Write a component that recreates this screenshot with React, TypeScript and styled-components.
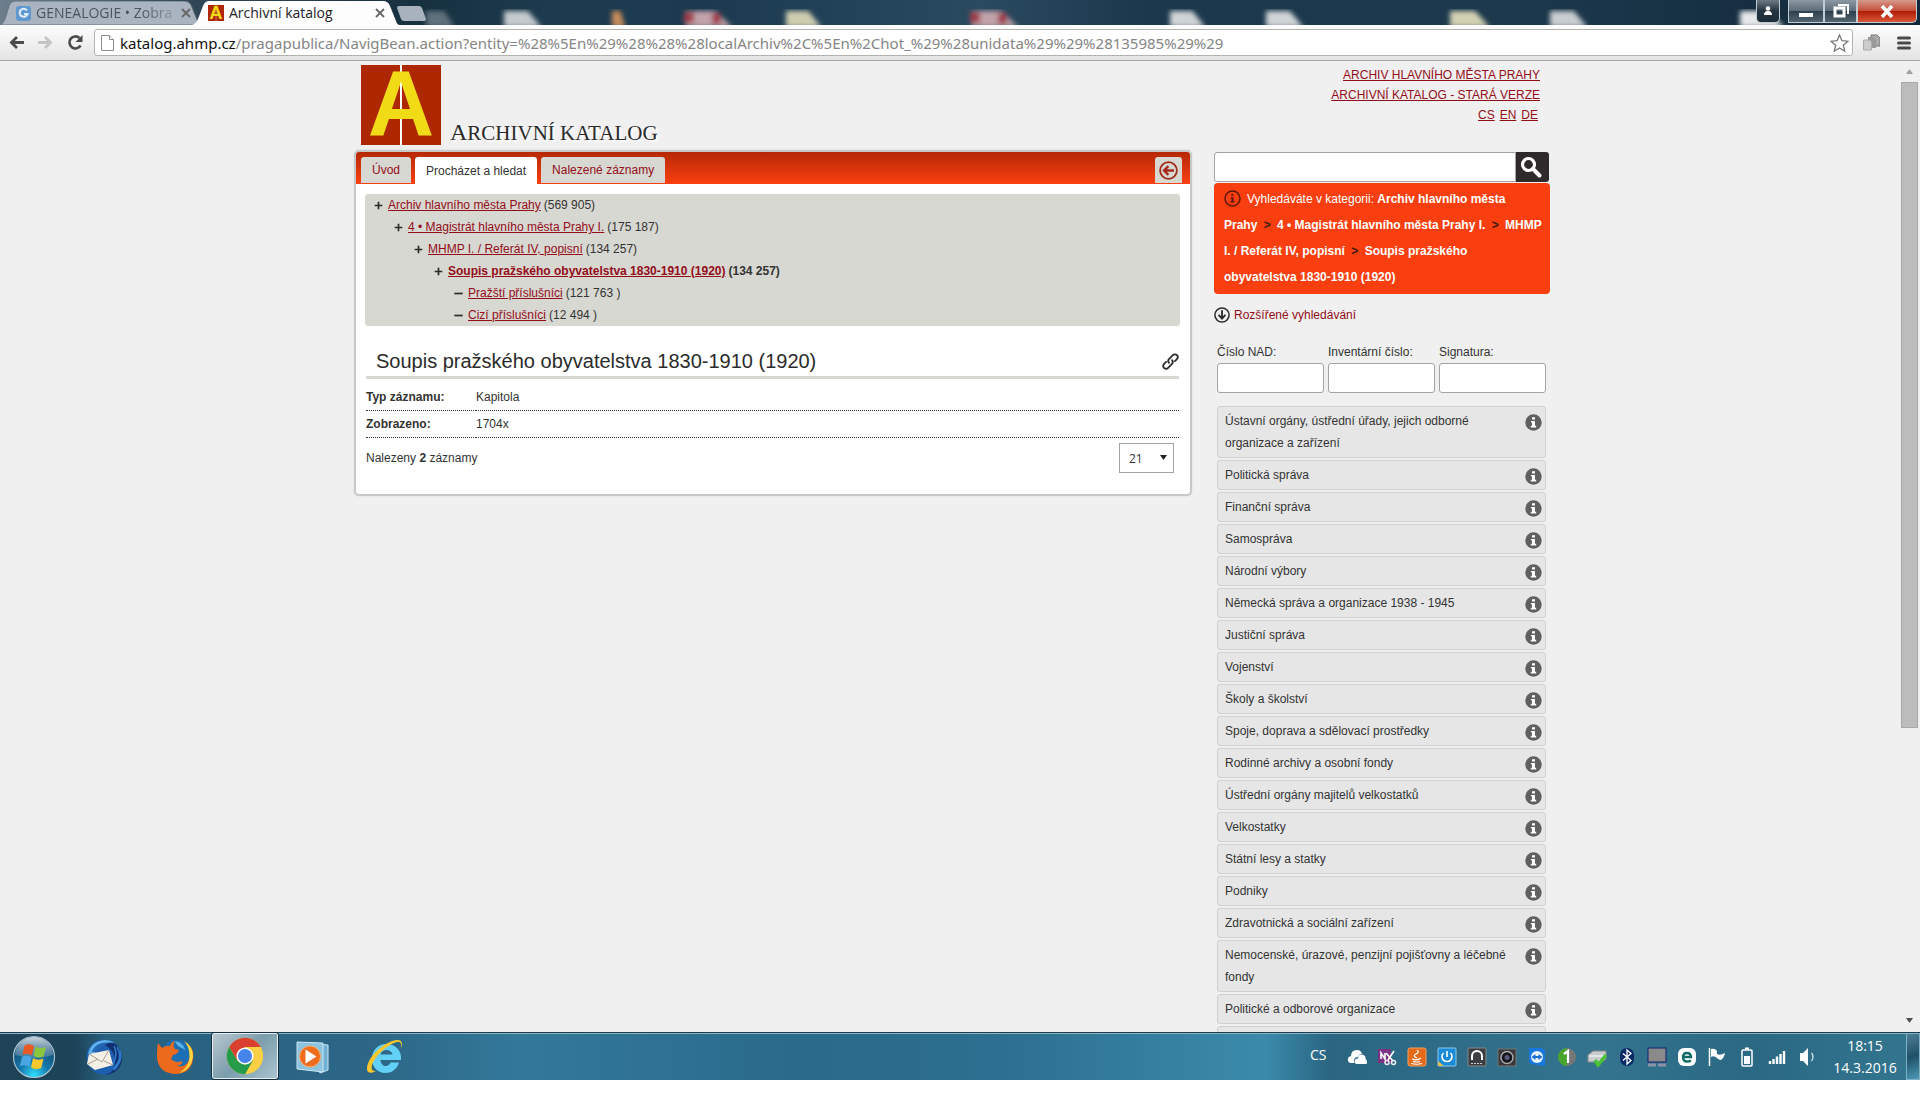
import React from "react";
import styled, { createGlobalStyle, css } from "styled-components";

const GlobalStyle = createGlobalStyle`
  *, *::before, *::after { box-sizing: border-box; }
  html, body { margin: 0; padding: 0; background: #fff; }
  body { font: 12px/22px "Liberation Sans", Arial, sans-serif; color: #333; overflow: hidden; }
  button, input, select { font: inherit; color: inherit; margin: 0; }
  ul { list-style: none; margin: 0; padding: 0; }
  svg { display: block; flex: none; }
`;

const uiFont = css`font-family: "Open Sans", "Noto Sans", sans-serif;`;

/* ---------- window frame ---------- */

const Screen = styled.div`
  height: 100vh;
  padding-bottom: 16px;
  display: flex;
  flex-direction: column;
`;

const TitleBar = styled.header`
  ${uiFont}
  position: relative;
  flex: none;
  height: 25px;
  display: flex;
  justify-content: space-between;
  align-items: flex-end;
  overflow: hidden;
  background: linear-gradient(90deg, #6d7f8c 0, #33495a 180px, #16303f 420px, #1e3c50 560px, #1b3a50 700px, #2a4a60 980px, #1b384c 1150px, #1c394d 1500px, #12283a 100%);
`;

const DesktopBlur = styled.svg`
  position: absolute;
  left: 0;
  top: 0;
`;

const Tabs = styled.div`
  position: relative;
  display: flex;
  align-items: flex-end;
`;

const ChromeTab = styled.div<{ $active?: boolean }>`
  position: relative;
  width: ${(p) => (p.$active ? 208 : 200)}px;
  height: 24px;
  margin-left: ${(p) => (p.$active ? -8 : 0)}px;
  padding: 0 ${(p) => (p.$active ? 15 : 9)}px 0 16px;
  display: flex;
  align-items: center;
  gap: 5px;
  font-size: 14px;
  line-height: 24px;
  color: ${(p) => (p.$active ? "#222" : "#4c545c")};
`;

const TabShape = styled.svg`
  position: absolute;
  inset: 0;
`;

const TabTitle = styled.span<{ $fade?: boolean }>`
  position: relative;
  flex: 1;
  white-space: nowrap;
  ${(p) => p.$fade && css`mask-image: linear-gradient(90deg, #000 75%, rgba(0, 0, 0, 0.2));`}
`;

const PlainButton = styled.button`
  position: relative;
  border: 0;
  padding: 0;
  background: none;
  display: flex;
  align-items: center;
  justify-content: center;
`;

const TabIcon = styled.span`
  position: relative;
`;

const NewTab = styled(PlainButton)`
  align-self: center;
  margin-left: -4px;
`;

const WindowControls = styled.div`
  position: relative;
  align-self: flex-start;
  display: flex;
  padding-right: 3px;
`;

const WindowButton = styled(PlainButton)<{ $w: number; $close?: boolean; $gap?: boolean }>`
  width: ${(p) => p.$w}px;
  height: 23px;
  margin-right: ${(p) => (p.$gap ? 8 : 0)}px;
  border: 1px solid #c3ccd2;
  border-top: 0;
  border-radius: ${(p) => (p.$gap ? "0 0 5px 5px" : p.$close ? "0 0 5px 0" : "0")};
  background: ${(p) =>
    p.$close
      ? "linear-gradient(#d59a8c, #c4503a 48%, #b01c05 52%, #d9583a)"
      : p.$gap
        ? "linear-gradient(#6c7b86, #22323e 50%, #1d2d39)"
        : "linear-gradient(#8b99a3, #5d6d79 48%, #2f414e 52%, #526470)"};
`;

const Toolbar = styled.nav`
  ${uiFont}
  flex: none;
  height: 36px;
  display: flex;
  align-items: center;
  background: linear-gradient(#fdfdfd, #e4e4e4);
  border-bottom: 1px solid #a3a3a3;
  padding-left: 5px;
`;

const ToolButton = styled(PlainButton)<{ $w: number }>`
  width: ${(p) => p.$w}px;
  height: 26px;
`;

const Omnibox = styled.div`
  flex: 1;
  height: 27px;
  margin: 0 1px 0 5px;
  padding: 0 3px 0 6px;
  display: flex;
  align-items: center;
  gap: 6px;
  background: #fff;
  border: 1px solid #b3b3ad;
  border-radius: 3px;
`;

const Url = styled.span`
  flex: 1;
  font-family: "Noto Sans", sans-serif;
  font-size: 15px;
  line-height: 24px;
  color: #858585;
  white-space: nowrap;
  b { font-weight: 400; color: #111; }
`;

/* ---------- web page ---------- */

const Viewport = styled.div`
  flex: 1;
  min-height: 0;
  display: flex;
  overflow: hidden;
  background: #f0f0f0;
`;

const PageArea = styled.div`
  flex: 1;
  min-width: 0;
`;

const Container = styled.div`
  max-width: 1200px;
  margin: 0 auto;
  padding-left: 4px;
`;

const ScrollTrack = styled.div`
  width: 20px;
  padding: 8px 2px 9px 1px;
  display: flex;
  flex-direction: column;
  align-items: center;
  gap: 8px;
`;

const ScrollThumb = styled.div`
  flex: 0 1 646px;
  width: 17px;
  background: #bcbcbc;
  border: 1px solid #a8a8a8;
`;

const Spacer = styled.div`
  flex: 1;
`;

const PageHead = styled.div`
  display: flex;
  justify-content: space-between;
  padding: 4px 10px 4px 7px;
`;

const Brand = styled.a`
  display: flex;
  align-items: flex-end;
  gap: 9px;
  color: #2b2b2b;
  text-decoration: none;
`;

const BrandName = styled.span`
  font: 21px/24px "Liberation Serif", "Times New Roman", serif;
  text-shadow: 2px 2px 2px #fff;
  &::first-letter { font-size: 24px; }
`;

const TopLinks = styled.div`
  display: flex;
  flex-direction: column;
  align-items: flex-end;
  line-height: 20px;
`;

const Link = styled.a`
  color: #930d19;
  text-decoration: underline;
`;

const Languages = styled.div`
  display: flex;
  gap: 5px;
  padding-right: 2px;
`;

const Columns = styled.div`
  display: flex;
  align-items: flex-start;
  gap: 22px;
`;

const Panel = styled.main`
  flex: 1;
  min-width: 0;
  margin-top: 1px;
  background: #fff;
  border: 2px solid #c8c8c8;
  border-radius: 5px;
  box-shadow: 0 0 2px #d4d4d4;
  padding-bottom: 21px;
`;

const PanelTabs = styled.div`
  display: flex;
  gap: 4px;
  height: 32px;
  padding: 5px 8px 0 5px;
  background: linear-gradient(#b52806, #fb4010);
  border-radius: 3px 3px 0 0;
`;

const PanelTab = styled.button<{ $active?: boolean; $end?: boolean }>`
  height: ${(p) => (p.$active ? 27 : 26)}px;
  padding: 0 ${(p) => (p.$end ? 4 : 11)}px;
  margin-left: ${(p) => (p.$end ? "auto" : "0")};
  border: 0;
  border-radius: 3px 3px 0 0;
  background: ${(p) => (p.$active ? "#fff" : "#d8d8d2")};
  color: ${(p) => (p.$active ? "#333" : "#930d19")};
`;

const Tree = styled.ul`
  margin: 10px 10px 0 9px;
  background: #d8d8d2;
  border-radius: 3px;
`;

const TreeItem = styled.li<{ $level: number; $current?: boolean }>`
  display: flex;
  align-items: center;
  gap: 3px;
  padding-left: ${(p) => 9 + p.$level * 20}px;
  font-weight: ${(p) => (p.$current ? 700 : 400)};
  svg { margin-right: 2px; }
`;

const RecordHead = styled.div`
  display: flex;
  align-items: center;
  justify-content: space-between;
  margin: 20px 11px 0 10px;
  padding-left: 10px;
  border-bottom: 3px solid #d8d8d2;
`;

const Heading = styled.h1`
  margin: 0;
  font-size: 20px;
  line-height: 30px;
  font-weight: 400;
  color: #2b2b2b;
`;

const Facts = styled.table`
  width: calc(100% - 21px);
  margin: 5px 11px 0 10px;
  border-collapse: separate;
  border-spacing: 0;
  th, td {
    height: 27px;
    padding: 0;
    text-align: left;
    border-bottom: 1px dotted #333;
  }
  th { width: 110px; }
`;

const Found = styled.div`
  display: flex;
  align-items: flex-start;
  justify-content: space-between;
  margin: 5px 16px 0 10px;
  line-height: 30px;
`;

const SelectBox = styled.span`
  position: relative;
  svg { position: absolute; right: 7px; top: 12px; pointer-events: none; }
`;

const Select = styled.select`
  ${uiFont}
  appearance: none;
  display: block;
  width: 55px;
  height: 30px;
  padding: 0 9px;
  font-size: 12px;
  background: #fff;
  border: 1px solid #a3a3a3;
  border-radius: 0;
`;

/* ---------- side column ---------- */

const Side = styled.aside`
  width: 336px;
  flex: none;
`;

const Search = styled.form`
  display: flex;
  padding: 3px 1px 0 0;
`;

const TextBox = styled.input<{ $search?: boolean }>`
  width: 100%;
  height: 30px;
  padding: 0 8px;
  background: #fff;
  border: 1px solid #a3a3a3;
  border-radius: ${(p) => (p.$search ? "3px 0 0 3px" : "3px")};
`;

const SearchButton = styled.button`
  flex: none;
  width: 33px;
  height: 30px;
  border: 0;
  padding: 0 0 0 4px;
  background: #2e2a2b;
  border-radius: 0 3px 3px 0;
`;

const Notice = styled.p`
  margin: 1px 0 0;
  padding: 3px 8px 4px 10px;
  background: #f93f0f;
  border-radius: 4px;
  color: #fff;
  line-height: 26px;
  svg { display: inline-block; vertical-align: -4px; margin-right: 6px; }
  i { font-style: normal; font-weight: 700; color: #3a1a12; margin: 0 3px; }
`;

const Advanced = styled.button`
  display: flex;
  align-items: center;
  gap: 4px;
  height: 22px;
  margin-top: 10px;
  padding: 0;
  border: 0;
  background: none;
  color: #930d19;
`;

const Fields = styled.div`
  display: grid;
  grid-template-columns: repeat(3, 1fr);
  gap: 4px;
  margin: 15px 4px 13px 3px;
`;

const Field = styled.label`
  display: block;
`;

const Categories = styled.ul`
  margin: 0 4px 0 3px;
  display: flex;
  flex-direction: column;
  gap: 2px;
`;

const Category = styled.li`
  display: flex;
  justify-content: space-between;
  align-items: flex-start;
  padding: 3px 3px 3px 7px;
  background: #e6e6e6;
  border: 1px solid #d0d0d0;
  border-radius: 3px;
  svg { margin-top: 4px; }
`;

const CategoryName = styled.span`
  max-width: 290px;
`;

/* ---------- taskbar ---------- */

const Taskbar = styled.footer`
  ${uiFont}
  flex: none;
  height: 48px;
  display: flex;
  align-items: stretch;
  justify-content: space-between;
  color: #fff;
  background: linear-gradient(90deg, #1f4357 0, #1d4358 75px, #28607f 105px, #2d6787 380px, #33799a 520px, #2a6a8b 800px, #2d6f90 1000px, #3b8aab 1265px, #2a6682 1330px, #34748f 1600px, #2a6883 1750px, #34768f 100%);
  border-top: 1px solid #1b3d50;
  box-shadow: inset 0 1px 0 #8db2c4;
`;

const Apps = styled.div`
  display: flex;
`;

const AppButton = styled(PlainButton)<{ $w: number; $open?: boolean }>`
  width: ${(p) => p.$w}px;
  ${(p) =>
    p.$open &&
    css`
      background: linear-gradient(135deg, #b9c8cf, #7b9dac 50%, #a9c4cf);
      border: 1px solid #e4eef2;
      outline: 1px solid #17303e;
      border-radius: 2px;
      margin: 0 0 1px 3px;
    `}
`;

const Tray = styled.div`
  display: flex;
  align-items: center;
`;

const Language = styled.span`
  width: 32px;
  font-size: 14px;
  padding-bottom: 4px;
`;

const TrayCell = styled.span`
  width: 30px;
  display: flex;
  justify-content: center;
`;

const Clock = styled.time`
  width: 82px;
  margin-left: 2px;
  text-align: center;
  font-size: 14px;
  line-height: 22px;
`;

const ShowDesktop = styled(PlainButton)`
  align-self: stretch;
  width: 14px;
  border: 1px solid #7fb0c4;
  background: linear-gradient(160deg, #4e7f95, #1f5069 50%, #4d9ab6);
`;

/* ---------- icons ---------- */

const InfoFilled = () => (
  <svg width="17" height="17" viewBox="0 0 17 17">
    <circle cx="8.5" cy="8.5" r="8.2" fill="#606060" />
    <path d="M7 3.2h3v2.3H7zM6 7h4v4.8h1.2v1.6H5.8v-1.6H7V8.6H6z" fill="#fff" />
  </svg>
);

const InfoOutline = () => (
  <svg width="17" height="17" viewBox="0 0 17 17">
    <circle cx="8.5" cy="8.5" r="7.5" fill="none" stroke="#5b160a" strokeWidth="1.5" />
    <path d="M7.3 4h2.2v1.8H7.3zM6.6 7.2h2.9v4.1h1.1v1.3H6.4v-1.3h1.1V8.5h-.9z" fill="#5b160a" />
  </svg>
);

const CircleArrow = ({ down }: { down?: boolean }) => (
  <svg width={down ? 16 : 19} height={down ? 16 : 19} viewBox="0 0 19 19" fill="none" stroke={down ? "#2b2b2b" : "#a32a1c"} strokeWidth="1.8">
    <circle cx="9.5" cy="9.5" r="8.4" />
    {down ? <path d="M9.5 4v10M5.4 9.4l4.1 4.4 4.1-4.4" strokeWidth="2.2" /> : <path d="M15 9.5H5M9.4 5.2L5 9.5l4.4 4.3" strokeWidth="2.4" />}
  </svg>
);

const Sign = ({ plus }: { plus: boolean }) => (
  <svg width="9" height="9" viewBox="0 0 9 9" stroke="#2b2b2b" strokeWidth="1.7">
    <path d={plus ? "M.7 4.5h7.6M4.5.7v7.6" : "M.3 4.5h8.4"} />
  </svg>
);

const ChainIcon = () => (
  <svg width="17" height="17" viewBox="0 0 17 17" fill="none" stroke="#2b2b2b" strokeWidth="1.8" strokeLinecap="round">
    <path d="M7 9.9C5.8 8.5 6 7 7.2 5.8L10.6 2.4C12 1 13.8 1 15 2.2 16.1 3.4 15.9 5.1 14.7 6.3L12.900 8.1" />
    <path d="M10 7.1C11.2 8.5 11 10 9.8 11.2L6.4 14.6C5 16 3.2 16 2 14.8.9 13.6 1.1 11.900 2.3 10.7L4.1 8.9" />
  </svg>
);

const SearchIcon = () => (
  <svg width="22" height="22" viewBox="0 0 22 22" fill="none" stroke="#fff">
    <circle cx="8.5" cy="8.5" r="6" strokeWidth="3.2" />
    <path d="M13 13l6.500 6.500" strokeWidth="4" strokeLinecap="round" />
  </svg>
);

const Triangle = ({ up, fill = "#505050", size = 7 }: { up?: boolean; fill?: string; size?: number }) => (
  <svg width={size} height={size - 2} viewBox="0 0 7 5" preserveAspectRatio="none">
    <path d={up ? "M3.5 0L7 5H0z" : "M0 0h7L3.500 5z"} fill={fill} />
  </svg>
);

const LogoSvg = styled.svg`
  overflow: visible;
`;

const ArchiveLogo = ({ size }: { size: number }) => (
  <LogoSvg width={size} height={size} viewBox="0 0 80 80">
    <rect width="80" height="80" fill="#ad2700" />
    <rect x="39" width="2" height="80" fill="#fff" />
    <text x="40" y="70" textAnchor="middle" fontFamily="Liberation Sans, Arial, sans-serif" fontWeight="700" fontSize="92" fill="#f1da16">A</text>
  </LogoSvg>
);

const CloseX = () => (
  <svg width="10" height="10" viewBox="0 0 10 10" stroke="#666" strokeWidth="1.8">
    <path d="M1 1l8 8M9 1L1 9" />
  </svg>
);

const ToolArrow = ({ back }: { back?: boolean }) => (
  <svg width="16" height="13" viewBox="0 0 17 14" fill="none" stroke={back ? "#4a4a4a" : "#c4c4c4"} strokeWidth="3">
    <path d={back ? "M16 7H3M8.5 1.2L2.5 7l6 5.8" : "M1 7h13M8.5 1.2l6 5.8-6 5.8"} />
  </svg>
);

const Reload = () => (
  <svg width="17" height="17" viewBox="0 0 17 17">
    <path d="M13.6 11.5A6 6 0 1 1 12.5 4" fill="none" stroke="#4a4a4a" strokeWidth="2.6" />
    <path d="M15.5 1v7H8.500z" fill="#4a4a4a" />
  </svg>
);

const StartOrb = () => (
  <svg width="44" height="44" viewBox="0 0 44 44">
    <defs>
      <radialGradient id="orb" cx=".5" cy=".95" r=".9">
        <stop offset="0" stopColor="#2fe0ff" />
        <stop offset=".4" stopColor="#1579ad" />
        <stop offset="1" stopColor="#123b5c" />
      </radialGradient>
      <linearGradient id="gloss" x2="0" y2="1">
        <stop offset="0" stopColor="#e8f1f6" stopOpacity=".85" />
        <stop offset="1" stopColor="#9cb6c8" stopOpacity=".3" />
      </linearGradient>
    </defs>
    <circle cx="22" cy="22" r="20.5" fill="url(#orb)" stroke="#a9c4d2" strokeWidth="1.2" />
    <path d="M3 20a19 18 0 0 1 38 0q-19 6-38 0z" fill="url(#gloss)" />
    <path d="M12.5 10.5q5-2.5 9.5.5l-2 9.5q-4.500-3-9.500-.5z" fill="#ea5a24" />
    <path d="M23.5 11.5q5 3 10.5.5l-2.300 9.500q-5 2.500-10-.5z" fill="#8cc63c" />
    <path d="M10 22q5-2.5 9.5.5l-2 9.5q-4.500-3-9.700-.5z" fill="#4aa5e4" />
    <path d="M21 23q5 3 10.500.5l-2.300 9.500q-5 2.500-10.200-.5z" fill="#fcc82c" />
  </svg>
);

const MailBird = () => (
  <svg width="40" height="40" viewBox="0 0 40 40">
    <circle cx="20" cy="20" r="17.5" fill="#1d5fae" />
    <path d="M14 4C26 0 38 9 38 21c0 10-8 17-18 17 6-1 11-5 11-11 1-12-5-17-17-23z" fill="#12306f" />
    <path d="M4 17C6 5 20-1 31 6c-9-2-17 2-20 10z" fill="#5eb0ec" />
    <path d="M8 15C10 8 18 4 26 6c-6 1-11 4-13 9z" fill="#2668b8" />
    <path d="M33 10q7 11-4 22M30 9q5 10-3 20M36 14q3 10-6 19" fill="none" stroke="#2f7bc9" strokeWidth="1.5" />
    <path d="M5 17l20-4 4 15-18 5L3 27z" fill="#f4f0e6" />
    <path d="M5 17l13 8 7-12M4 27l10-5M29 28l-9-4" fill="none" stroke="#a89f90" strokeWidth="1" />
  </svg>
);

const FoxGlobe = () => (
  <svg width="38" height="38" viewBox="0 0 38 38">
    <circle cx="21" cy="17" r="15.500" fill="#1d6fb5" />
    <path d="M17 3c7 0 11 4 12 9-4-3-8-3-10-9z" fill="#5cb4e4" />
    <path d="M2 5l4 5q4-3 8-2 1-4 5-5-3 5 0 8l4 1q-1 4-6 5l-2 4q5 5 11 2 1 4-5 5 12 2 13-12 0-7-5-12 10 5 8 17-2 15-18 15Q2 35 1 19 1 10 2 5z" fill="#ec6a1b" />
    <path d="M28 3q9 5 9 16-2 13-14 16 13-8 10-22-1-6-5-10z" fill="#ffd83f" />
  </svg>
);

const ChromeIcon = () => (
  <svg width="38" height="38" viewBox="0 0 38 38">
    <circle cx="19" cy="19" r="18.2" fill="#f9cf45" />
    <path d="M3.24 9.9A18.2 18.2 0 0 1 34.76 9.900H19L11.1 23.5z" fill="#d9402f" />
    <path d="M3.24 9.9A18.2 18.2 0 0 0 19 37.2l7.900-13.700-7.900 4.200-7.900-4.200z" fill="#239b48" />
    <circle cx="19" cy="19" r="8.6" fill="#fff" />
    <circle cx="19" cy="19" r="7" fill="#4683ea" />
  </svg>
);

const PlayerIcon = () => (
  <svg width="34" height="34" viewBox="0 0 34 34">
    <path d="M8 3l24 2v25l-8 3z" fill="#6fb0d3" stroke="#cde7f3" />
    <path d="M1 2l26 1v29L1 29z" fill="#8cc3df" stroke="#cde7f3" />
    <circle cx="14" cy="16.5" r="10.5" fill="#f06c1d" stroke="#fbb070" />
    <path d="M9.5 9.5l11 7-11 7z" fill="#fff" />
  </svg>
);

const ExplorerIcon = () => (
  <svg width="40" height="40" viewBox="0 0 40 40">
    <path d="M34 25.500C32 33 26 36 20.500 36 12 36 7 29.500 7 22 7 13 13 7 21.500 7 31 7 37 14 36 23H15.500c.5 7.500 8.500 7.500 10 2.500zM15.500 17.500h12c-1-6-11-6-12 0z" fill="#62d1f5" />
    <path d="M36 12c2-5 1-9-3-9C24 2 2 18 2 32c0 4 4 5 9 2-4 0-5-2-4-6C10 19 23 7 32 5c4-1 5 3 4 7z" fill="#f7c82c" />
  </svg>
);

const trayIcons: { name: string; art: React.ReactNode }[] = [
  { name: "cloud", art: <><path d="M1 14q-1-4 3-5 0-6 6-6 4 0 5 4-3 0-4 3-4 0-4 4 0 1 .5 2H4q-2.500 0-3-2z" fill="#fff" /><path d="M8 16q-1.500-4 3-4.500 0-4 4-4 4 .5 3.500 4.500 2.500 1.500 1 5H10q-1.500 0-2-1z" fill="#fff" /></> },
  { name: "snip", art: <><rect x="1" y="2" width="13" height="14" fill="#7c3383" /><path d="M4 12V6l4 6V6" stroke="#fff" strokeWidth="1.6" fill="none" /><path d="M17 4l-6 9M9 6l7 8" stroke="#fff" strokeWidth="1.6" /><g fill="none" stroke="#eee" strokeWidth="1.5"><circle cx="10" cy="15.5" r="2" /><circle cx="16.5" cy="15.5" r="2" /></g></> },
  { name: "java", art: <><rect x="1" y="1" width="18" height="18" rx="2" fill="#e46a1a" stroke="#f0a060" /><path d="M10 3q3 2-1 4t1 4M5 12q5 2 9-1M6 14.500q4 1 7 0M4 16.500q6 1.500 11 0" stroke="#fff" fill="none" strokeWidth="1.2" /></> },
  { name: "power", art: <><rect x="1" y="1" width="18" height="18" rx="1" fill="#1a8bd8" stroke="#8cc8ee" /><path d="M6.5 6a5 5 0 1 0 7 0M10 4v6" stroke="#fff" fill="none" strokeWidth="1.6" /><path d="M1 14l6 5H1z" fill="#e0c050" /></> },
  { name: "audio", art: <><rect x="1" y="1" width="18" height="18" rx="1" fill="#3b3f44" stroke="#888" /><path d="M5 13V9a5 5 0 0 1 10 0v4" stroke="#fff" fill="none" strokeWidth="2" /><path d="M4 16.5h12" stroke="#ccc" strokeDasharray="2 1" /></> },
  { name: "camera", art: <><rect x="1" y="2" width="18" height="17" fill="#39393c" stroke="#777" /><circle cx="10" cy="10.5" r="6" fill="#15151c" stroke="#aaa" strokeWidth="1.5" /><circle cx="10" cy="10.5" r="2.5" fill="#5a5a80" /></> },
  { name: "remote", art: <><path d="M2 1h13l3 3v15l-14-2-2-2z" fill="#1878e0" /><circle cx="10" cy="10" r="6" fill="#eaf4ff" /><path d="M4.5 10l4-3v2h3V7l4 3-4 3v-2h-3v2z" fill="#1a6ed0" /></> },
  { name: "one", art: <><circle cx="10" cy="10" r="9" fill="#777" /><path d="M10 1a9 9 0 0 0 0 18z" fill="#47a52c" /><path d="M7 7l4-3v12" stroke="#fff" strokeWidth="2.2" fill="none" /></> },
  { name: "printer", art: <><path d="M1 8l5-4h13v8l-4 3H1z" fill="#c8ccd0" stroke="#888" /><path d="M2 9h16" stroke="#fff" /><path d="M8 13l3 5 8-10" stroke="#49c233" strokeWidth="3.5" fill="none" /></> },
  { name: "bluetooth", art: <><rect x="3" y="1" width="14" height="18" rx="7" fill="#0b2a66" /><path d="M6 6.5l8 7-4 3.500V3l4 3.500-8 7" stroke="#fff" fill="none" strokeWidth="1.3" /></> },
  { name: "display", art: <><rect x="1" y="1" width="18" height="14" fill="#8a8a8a" stroke="#14206e" /><path d="M1 18h8M11 18h8" stroke="#8a93a8" strokeWidth="3" /></> },
  { name: "security", art: <><rect x="1" y="1" width="18" height="18" rx="6" fill="#fff" /><path d="M6 10h8q0-4-4-4t-4 4q0 4.500 4 4.500 2.500 0 3.800-1.200" stroke="#0b6a66" strokeWidth="2.4" fill="none" /></> },
  { name: "flag", art: <><path d="M2.5 1v18" stroke="#fff" strokeWidth="1.5" /><path d="M4 2q4-1 6 2v7q-3-3-6-1zM10 7q3 2 8-1-1 5-4 7-2 0-4-2z" fill="#fff" /></> },
  { name: "battery", art: <><rect x="5" y="3" width="10" height="16" rx="1" fill="none" stroke="#fff" strokeWidth="1.5" /><path d="M8 1.5h4" stroke="#fff" strokeWidth="2" /><rect x="7" y="9" width="6" height="8" fill="#fff" /></> },
  { name: "signal", art: <path d="M3 17v-3M6.500 17v-5M10 17v-7.500M13.500 17V7M17 17V4" stroke="#fff" strokeWidth="2.4" /> },
  { name: "volume", art: <><path d="M3 6h3l5-5v18l-5-5H3z" fill="#fff" /><path d="M14.5 6q3 4 0 8" stroke="#cfe0e8" fill="none" strokeWidth="1.3" /></> },
];

const blobs: { x: number; w: number; fill: string }[] = [
  { x: 426, w: 26, fill: "#5f717d" }, { x: 504, w: 34, fill: "#c5cacd" }, { x: 612, w: 12, fill: "#c98d5a" },
  { x: 686, w: 42, fill: "#c3a3aa" }, { x: 786, w: 32, fill: "#cfcdb0" }, { x: 972, w: 42, fill: "#c3a3aa" },
  { x: 1170, w: 32, fill: "#d0d4d6" }, { x: 1266, w: 34, fill: "#d0d4d6" }, { x: 1450, w: 36, fill: "#d3d1b4" },
  { x: 1550, w: 34, fill: "#c9cdd0" }, { x: 1740, w: 40, fill: "#e6e9ea" },
];

const tree = [
  { level: 0, name: "Archiv hlavního města Prahy", count: "(569 905)" },
  { level: 1, name: "4 • Magistrát hlavního města Prahy I.", count: "(175 187)" },
  { level: 2, name: "MHMP I. / Referát IV, popisní", count: "(134 257)" },
  { level: 3, name: "Soupis pražského obyvatelstva 1830-1910 (1920)", count: "(134 257)" },
  { level: 4, name: "Pražští příslušníci", count: "(121 763 )" },
  { level: 4, name: "Cizí příslušníci", count: "(12 494 )" },
];

const categories = [
  "Ústavní orgány, ústřední úřady, jejich odborné organizace a zařízení",
  "Politická správa",
  "Finanční správa",
  "Samospráva",
  "Národní výbory",
  "Německá správa a organizace 1938 - 1945",
  "Justiční správa",
  "Vojenství",
  "Školy a školství",
  "Spoje, doprava a sdělovací prostředky",
  "Rodinné archivy a osobní fondy",
  "Ústřední orgány majitelů velkostatků",
  "Velkostatky",
  "Státní lesy a statky",
  "Podniky",
  "Zdravotnická a sociální zařízení",
  "Nemocenské, úrazové, penzijní pojišťovny a léčebné fondy",
  "Politické a odborové organizace",
  "\u00a0",
];

/* ---------- sections ---------- */

const BrowserChrome = () => (
  <>
    <TitleBar>
      <DesktopBlur width="1920" height="25">
        <defs><filter id="soft"><feGaussianBlur stdDeviation="2.5" /></filter></defs>
        <g filter="url(#soft)">
          {blobs.map((b) => (
            <path key={b.x} d={`M${b.x} 11h${b.w * 0.7}l${b.w * 0.4} 16H${b.x}z`} fill={b.fill} />
          ))}
          <path d="M684 12h10v11h-10zM712 13h9v11h-9zM970 12h10v11h-10zM998 13h9v11h-9z" fill="#a03a48" />
        </g>
      </DesktopBlur>
      <Tabs>
        <ChromeTab>
          <TabShape width="200" height="24">
            <path d="M0 24Q3 23 5 18L9 5Q11 0 16 0H184q5 0 7 4l8 20z" fill="#a9b4c0" stroke="#66737e" />
          </TabShape>
          <TabIcon>
            <svg width="15" height="15" viewBox="0 0 15 15"><rect width="15" height="15" rx="3" fill="#5f97cf" /><path d="M11 4.5A4 4 0 1 0 11.500 8H8" fill="none" stroke="#e2eefa" strokeWidth="2" /></svg>
          </TabIcon>
          <TabTitle $fade>GENEALOGIE • Zobra</TabTitle>
          <PlainButton aria-label="Zavřít panel"><CloseX /></PlainButton>
        </ChromeTab>
        <ChromeTab $active>
          <TabShape width="208" height="24">
            <path d="M0 24Q4 23 6 18L11 5Q13 0 17 0H191q5 0 7 5l6 15q1 4 4 4z" fill="#fdfdfd" />
          </TabShape>
          <TabIcon><ArchiveLogo size={16} /></TabIcon>
          <TabTitle>Archivní katalog</TabTitle>
          <PlainButton aria-label="Zavřít panel"><CloseX /></PlainButton>
        </ChromeTab>
        <NewTab aria-label="Nový panel">
          <svg width="30" height="15" viewBox="0 0 30 15"><path d="M1 2q0-2 2-2h20q2 0 3 2l4 11q0 2-2 2H8q-2 0-3-2z" fill="#a7b2bd" /></svg>
        </NewTab>
      </Tabs>
      <WindowControls>
        <WindowButton $w={24} $gap aria-label="Profil">
          <svg width="10" height="10" viewBox="0 0 10 10" fill="#fff"><circle cx="5" cy="2.5" r="2.3" /><path d="M1 9q0-4 4-4t4 4z" /></svg>
        </WindowButton>
        <WindowButton $w={36} aria-label="Minimalizovat">
          <svg width="16" height="14" viewBox="0 0 16 14"><rect x="1" y="9" width="14" height="4" fill="#fff" /></svg>
        </WindowButton>
        <WindowButton $w={33} aria-label="Obnovit">
          <svg width="18" height="16" viewBox="0 0 18 16" fill="none" stroke="#fff" strokeWidth="2"><path d="M6 2h10v9" /><rect x="3" y="5" width="9" height="8" strokeWidth="3" /></svg>
        </WindowButton>
        <WindowButton $w={60} $close aria-label="Zavřít">
          <svg width="14" height="13" viewBox="0 0 14 13" stroke="#fff" strokeWidth="3.6"><path d="M2 1l10 11M12 1L2 12" /></svg>
        </WindowButton>
      </WindowControls>
    </TitleBar>
    <Toolbar>
      <ToolButton $w={24} aria-label="Zpět"><ToolArrow back /></ToolButton>
      <ToolButton $w={32} aria-label="Vpřed"><ToolArrow /></ToolButton>
      <ToolButton $w={28} aria-label="Obnovit stránku"><Reload /></ToolButton>
      <Omnibox>
        <svg width="13" height="16" viewBox="0 0 13 16" fill="#fff" stroke="#8c8c8c"><path d="M.5.5h8l4 4v11H.5z" /><path d="M8.5.5v4h4" /></svg>
        <Url><b>katalog.ahmp.cz</b>/pragapublica/NavigBean.action?entity=%28%5En%29%28%28%28localArchiv%2C%5En%2Chot_%29%28unidata%29%29%28135985%29%29</Url>
        <svg width="19" height="18" viewBox="0 0 19 18" fill="none" stroke="#777" strokeWidth="1.3"><path d="M9.5 1l2.400 5.700 6.100.5-4.700 4 1.500 6-5.300-3.300L4.200 17.200l1.500-6-4.700-4 6.100-.5z" /></svg>
      </Omnibox>
      <ToolButton $w={34} aria-label="Rozšíření">
        <svg width="17" height="17" viewBox="0 0 17 17"><path d="M8 1h6l3 3v8H8z" fill="#aaa" stroke="#777" /><path d="M5 3h5l3 3v8H5z" fill="#999" /><path d="M.5 6h6l2 2v8H.5z" fill="#ccc" stroke="#aaa" /></svg>
      </ToolButton>
      <ToolButton $w={32} aria-label="Nabídka">
        <svg width="14" height="14" viewBox="0 0 14 14" stroke="#4a4a4a" strokeWidth="3" strokeLinecap="round"><path d="M1.5 2h11M1.5 7h11M1.5 12h11" /></svg>
      </ToolButton>
    </Toolbar>
  </>
);

const RecordPanel = () => (
  <Panel>
    <PanelTabs>
      <PanelTab>Úvod</PanelTab>
      <PanelTab $active>Procházet a hledat</PanelTab>
      <PanelTab>Nalezené záznamy</PanelTab>
      <PanelTab $end aria-label="Zpět"><CircleArrow /></PanelTab>
    </PanelTabs>
    <Tree>
      {tree.map((t) => (
        <TreeItem key={t.name} $level={t.level} $current={t.level === 3}>
          <Sign plus={t.level < 4} />
          <Link href="#">{t.name}</Link>
          <span>{t.count}</span>
        </TreeItem>
      ))}
    </Tree>
    <RecordHead>
      <Heading>Soupis pražského obyvatelstva 1830-1910 (1920)</Heading>
      <ChainIcon />
    </RecordHead>
    <Facts>
      <tbody>
        <tr><th scope="row">Typ záznamu:</th><td>Kapitola</td></tr>
        <tr><th scope="row">Zobrazeno:</th><td>1704x</td></tr>
      </tbody>
    </Facts>
    <Found>
      <span>Nalezeny <b>2</b> záznamy</span>
      <SelectBox>
        <Select aria-label="Počet záznamů" defaultValue="21"><option>21</option></Select>
        <Triangle fill="#222" size={7} />
      </SelectBox>
    </Found>
  </Panel>
);

const Crumb = () => <i>&gt;</i>;

const SideColumn = () => (
  <Side>
    <Search onSubmit={(e) => e.preventDefault()}>
      <TextBox $search type="text" aria-label="Hledat" />
      <SearchButton type="submit" aria-label="Vyhledat"><SearchIcon /></SearchButton>
    </Search>
    <Notice>
      <InfoOutline />Vyhledáváte v kategorii: <b>Archiv hlavního města Prahy</b>&nbsp;<Crumb />&nbsp;<b>4 • Magistrát hlavního města Prahy I.</b>&nbsp;<Crumb />&nbsp;<b>MHMP I. / Referát IV, popisní</b>&nbsp;<Crumb />&nbsp;<b>Soupis pražského obyvatelstva 1830-1910 (1920)</b>
    </Notice>
    <Advanced><CircleArrow down />Rozšířené vyhledávání</Advanced>
    <Fields>
      {["Číslo NAD:", "Inventární číslo:", "Signatura:"].map((label) => (
        <Field key={label}>{label}<TextBox type="text" /></Field>
      ))}
    </Fields>
    <Categories>
      {categories.map((name) => (
        <Category key={name}><CategoryName>{name}</CategoryName><InfoFilled /></Category>
      ))}
    </Categories>
  </Side>
);

export default function App() {
  return (
    <Screen>
      <GlobalStyle />
      <BrowserChrome />
      <Viewport>
        <PageArea>
          <Container>
            <PageHead>
              <Brand href="#"><ArchiveLogo size={80} /><BrandName>ARCHIVNÍ KATALOG</BrandName></Brand>
              <TopLinks>
                <Link href="#">ARCHIV HLAVNÍHO MĚSTA PRAHY</Link>
                <Link href="#">ARCHIVNÍ KATALOG - STARÁ VERZE</Link>
                <Languages><Link href="#">CS</Link><Link href="#">EN</Link><Link href="#">DE</Link></Languages>
              </TopLinks>
            </PageHead>
            <Columns>
              <RecordPanel />
              <SideColumn />
            </Columns>
          </Container>
        </PageArea>
        <ScrollTrack>
          <Triangle up fill="#a0a0a0" />
          <ScrollThumb />
          <Spacer />
          <Triangle />
        </ScrollTrack>
      </Viewport>
      <Taskbar>
        <Apps>
          <AppButton $w={68} aria-label="Start"><StartOrb /></AppButton>
          <AppButton $w={72} aria-label="Thunderbird"><MailBird /></AppButton>
          <AppButton $w={69} aria-label="Firefox"><FoxGlobe /></AppButton>
          <AppButton $w={66} $open aria-label="Chrome"><ChromeIcon /></AppButton>
          <AppButton $w={70} aria-label="Media Player"><PlayerIcon /></AppButton>
          <AppButton $w={74} aria-label="Internet Explorer"><ExplorerIcon /></AppButton>
        </Apps>
        <Tray>
          <Language>CS</Language>
          {trayIcons.map((t) => (
            <TrayCell key={t.name}><svg width="20" height="20" viewBox="0 0 20 20" role="img" aria-label={t.name}>{t.art}</svg></TrayCell>
          ))}
          <Clock>18:15<br />14.3.2016</Clock>
          <ShowDesktop aria-label="Zobrazit plochu" />
        </Tray>
      </Taskbar>
    </Screen>
  );
}
